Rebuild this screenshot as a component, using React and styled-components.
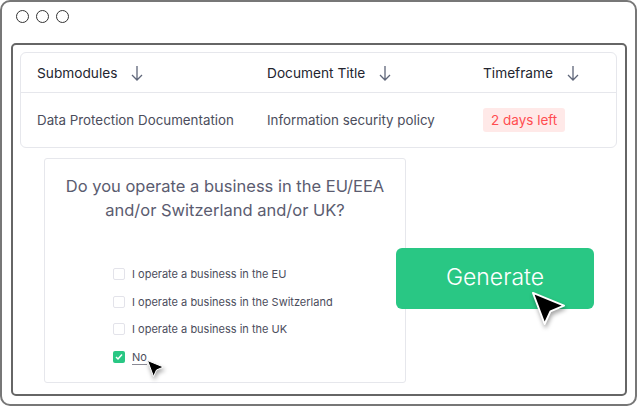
import React from "react";
import styled, { createGlobalStyle } from "styled-components";

const GlobalStyle = createGlobalStyle`
  html, body {
    margin: 0;
    padding: 0;
    background: #fff;
    font-family: "Inter", "Liberation Sans", sans-serif;
  }
`;

const Page = styled.div`
  width: 638px;
  height: 406px;
  box-sizing: border-box;
  padding: 0 1px 0 0;
`;

const Window = styled.div`
  height: 100%;
  box-sizing: border-box;
  border: 2px solid #777;
  border-radius: 10px;
  padding: 8px 8px 8px 9px;
  display: flex;
  flex-direction: column;
`;

const Dots = styled.div`
  display: flex;
  gap: 7px;
  margin: 0 0 0 5px;
  height: 33px;
`;

const Dot = styled.span`
  width: 13px;
  height: 13px;
  box-sizing: border-box;
  border: 1.5px solid #333;
  border-radius: 50%;
`;

const Inner = styled.div`
  flex: 1;
  border: 2px solid #666;
  border-radius: 5px;
  padding: 7px 8px 10px 7px;
  display: flex;
  flex-direction: column;
`;

const Table = styled.div`
  border: 1px solid #e6e7ec;
  border-radius: 6px;
  height: 96px;
  box-sizing: border-box;
`;

const Row = styled.div`
  display: grid;
  grid-template-columns: 230px 216px 1fr;
  align-items: center;
  padding-left: 16px;
  box-sizing: border-box;
  height: ${(p) => p.$height}px;
  border-bottom: ${(p) => (p.$divider ? "1px solid #e6e7ec" : "none")};
`;

const Head = styled.div`
  display: flex;
  align-items: center;
  gap: 14px;
  font-size: 13.7px;
  font-weight: 400;
  color: #23252f;
`;

const Cell = styled.div`
  font-size: 13.35px;
  color: #4b4d5c;
`;

const Badge = styled.span`
  display: inline-block;
  background: #ffe9e8;
  color: #ff4d50;
  font-size: 13.5px;
  border-radius: 3px;
  padding: 4px 8px;
  line-height: 16px;
`;

const Lower = styled.div`
  flex: 1;
  display: flex;
  align-items: flex-start;
  padding: 10px 0 0 24px;
`;

const Card = styled.div`
  width: 362px;
  height: 225px;
  box-sizing: border-box;
  border: 1px solid #e6e7ec;
  border-radius: 3px;
  padding: 15px 0 0;
`;

const Question = styled.h2`
  margin: 0;
  font-size: 16.5px;
  font-weight: 400;
  line-height: 24px;
  color: #5b5c70;
  text-align: center;
`;

const Options = styled.div`
  margin: 44px 0 0 68px;
  display: flex;
  flex-direction: column;
  gap: 11.7px;
`;

const Option = styled.div`
  display: flex;
  align-items: center;
  gap: 7px;
  height: 16px;
  font-size: 11px;
  color: #4b4d5c;
  position: relative;
`;

const Box = styled.span`
  width: 12px;
  height: 12px;
  border-radius: 2px;
  box-sizing: border-box;
  border: ${(p) => (p.$checked ? "none" : "1px solid #e3e3ea")};
  background: ${(p) => (p.$checked ? "#29c784" : "#fff")};
  display: flex;
  align-items: center;
  justify-content: center;
`;

const Underlined = styled.span`
  border-bottom: 1px solid #8a8a94;
  line-height: 14px;
`;

const GenerateButton = styled.button`
  position: relative;
  margin: 90px 0 0 -10px;
  width: 198px;
  height: 61px;
  border: none;
  border-radius: 6px;
  background: #29c784;
  color: #fff;
  font-family: inherit;
  font-size: 23px;
  font-weight: 300;
  padding: 0 0 3px;
`;

const CursorIcon = styled.svg`
  position: absolute;
  overflow: visible;
  left: ${(p) => p.$left}px;
  top: ${(p) => p.$top}px;
  width: ${(p) => p.$size}px;
  height: ${(p) => p.$size}px;
  filter: drop-shadow(1px 3px 2px rgba(0, 0, 0, 0.35));
`;

const Arrow = () => (
  <svg width="12" height="16" viewBox="0 0 12 16" fill="none" stroke="#5f6679" strokeWidth="1.3">
    <path d="M6 1v14M1 10l5 5 5-5" />
  </svg>
);

const Cursor = (props) => (
  <CursorIcon viewBox="0 0 34 34" {...props}>
    <path
      d="M1 1L33 14L19 20L13 33Z"
      fill="#000"
      stroke="#fff"
      strokeWidth="2"
      strokeLinejoin="round"
    />
  </CursorIcon>
);

const App = () => {
  const options = [
    "I operate a business in the EU",
    "I operate a business in the Switzerland",
    "I operate a business in the UK",
  ];

  return (
    <Page>
      <GlobalStyle />
      <Window>
        <Dots>
          <Dot />
          <Dot />
          <Dot />
        </Dots>
        <Inner>
          <Table>
            <Row $height={40} $divider>
              <Head>Submodules <Arrow /></Head>
              <Head>Document Title <Arrow /></Head>
              <Head>Timeframe <Arrow /></Head>
            </Row>
            <Row $height={54}>
              <Cell>Data Protection Documentation</Cell>
              <Cell>Information security policy</Cell>
              <div><Badge>2 days left</Badge></div>
            </Row>
          </Table>
          <Lower>
            <Card>
              <Question>
                Do you operate a business in the EU/EEA
                <br />
                and/or Switzerland and/or UK?
              </Question>
              <Options>
                {options.map((text) => (
                  <Option key={text}>
                    <Box />
                    {text}
                  </Option>
                ))}
                <Option>
                  <Box $checked>
                    <svg width="8" height="8" viewBox="0 0 8 8" fill="none" stroke="#fff" strokeWidth="1.5">
                      <path d="M1 4l2 2 4-4.5" />
                    </svg>
                  </Box>
                  <Underlined>No</Underlined>
                  <Cursor $left={34} $top={11} $size={17} />
                </Option>
              </Options>
            </Card>
            <GenerateButton>
              Generate
              <Cursor $left={136} $top={44} $size={33} />
            </GenerateButton>
          </Lower>
        </Inner>
      </Window>
    </Page>
  );
};

export default App;
